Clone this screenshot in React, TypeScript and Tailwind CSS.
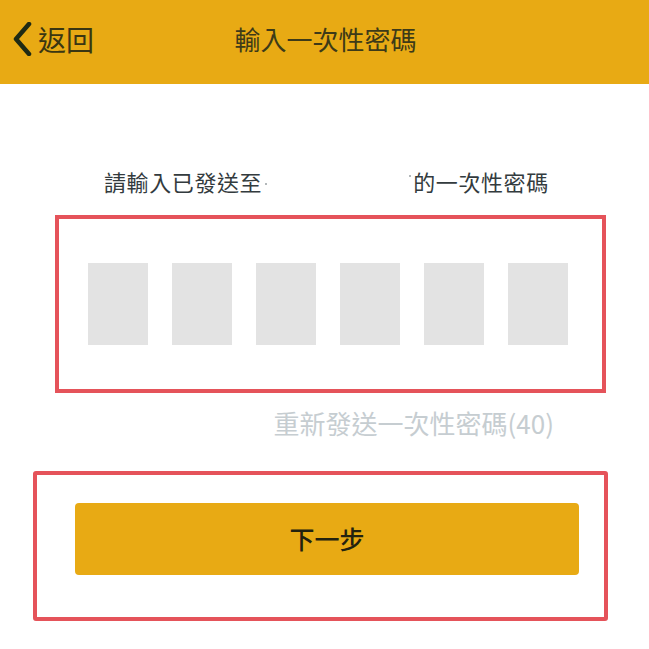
const font = { fontFamily: '"Noto Sans CJK TC", "Noto Sans", sans-serif' };

function BackChevron() {
    return (
        <svg width="22" height="34" viewBox="0 0 22 34" fill="none" className="text-[#1f2a14]">
            <path d="M18 2 L5 17 L18 32" stroke="currentColor" strokeWidth="4.5" strokeLinecap="round" strokeLinejoin="round" />
        </svg>
    );
}

export default function App() {
    const digits = [0, 1, 2, 3, 4, 5];

    return (
        <div className="w-[649px] h-[649px] bg-white overflow-hidden" style={font}>
            {/* header */}
            <header className="relative h-[84px] bg-[#e8aa14] flex items-center justify-center">
                <button className="absolute left-[11px] top-[22px] flex items-center gap-[5px] text-[#3a3612]">
                    <BackChevron />
                    <span className="text-[28px] leading-none -mt-[1px]">返回</span>
                </button>
                <h1 className="text-[26px] leading-none text-[#3d3a18] -mt-[6px] ml-[2px]">輸入一次性密碼</h1>
            </header>

            {/* subtitle */}
            <div className="flex items-center pl-[104px] pt-[86px] text-[22px] leading-none text-[#333b3e] tracking-[0.6px]">
                <span>請輸入已發送至</span>
                <span className="w-[2px] h-[2px] rounded-full bg-[#9aa0a3] ml-[3px] mt-[6px]" />
                <span className="w-[2px] h-[2px] rounded-full bg-[#9aa0a3] ml-[142px] -mt-[10px]" />
                <span className="ml-[2px]">的一次性密碼</span>
            </div>

            {/* code boxes */}
            <div className="ml-[55px] mt-[23px] w-[551px] h-[178px] border-4 border-[#e5535a] flex justify-center gap-[24px] pt-[44px] pr-[6px]">
                {digits.map((d) => (
                    <div key={d} className="w-[60px] h-[82px] bg-[#e3e3e3]" />
                ))}
            </div>

            <div className="flex justify-end pr-[95px] pt-[17px]">
                <span className="text-[26px] leading-none text-[#c6cdd1]">重新發送一次性密碼(40)</span>
            </div>

            {/* next button */}
            <div className="ml-[33px] mt-[35px] w-[575px] h-[150px] border-4 border-[#e5535a] rounded-[3px] pt-[28px] pl-[38px]">
                <button className="w-[504px] h-[72px] rounded-[4px] bg-[#e8aa14] text-[25px] text-[#23220f] font-medium">
                    下一步
                </button>
            </div>
        </div>
    );
}
